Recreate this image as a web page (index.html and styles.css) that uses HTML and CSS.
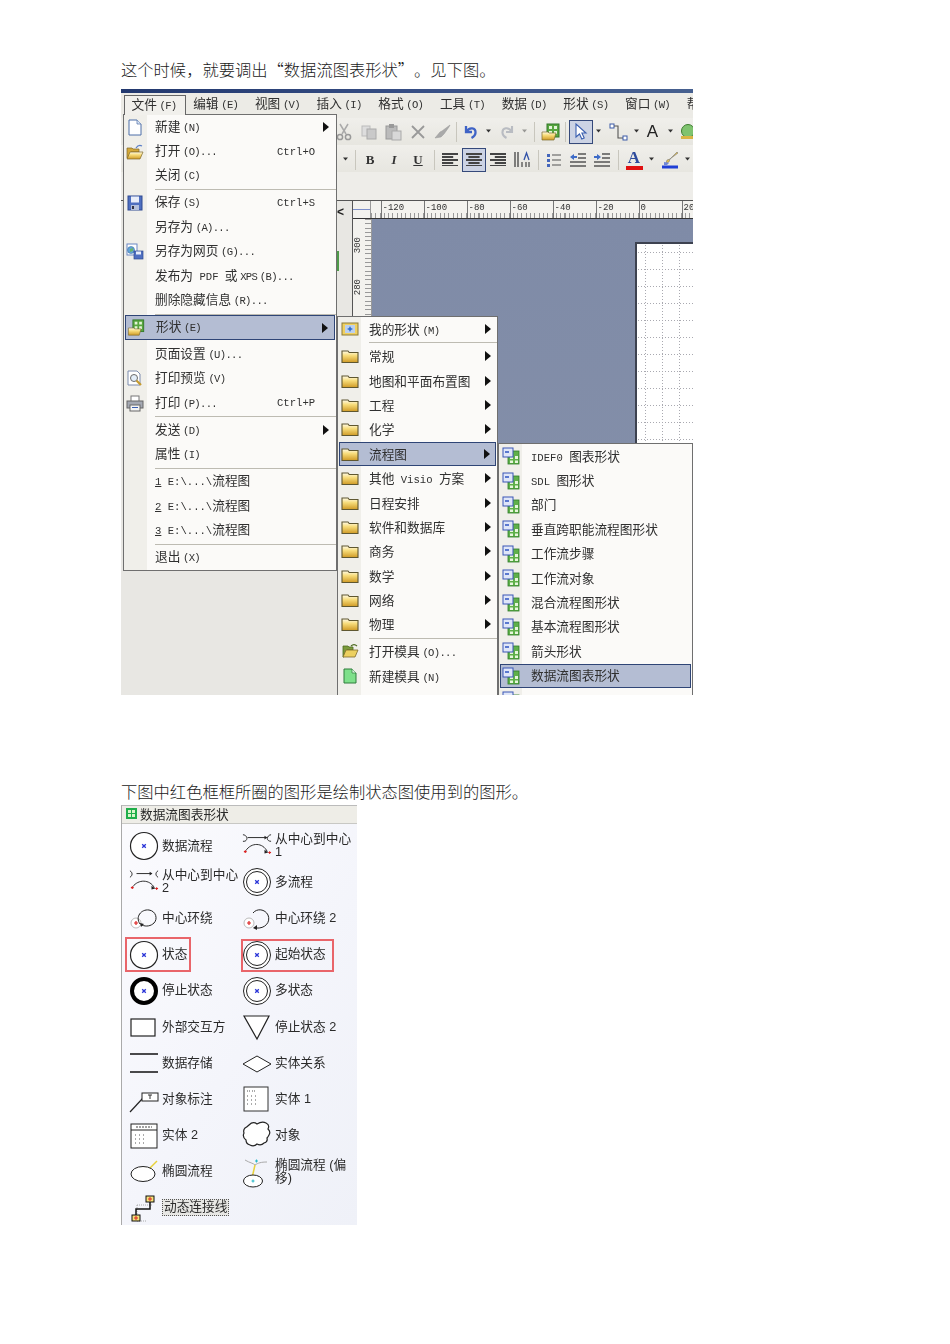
FILE: index.html
```html
<!DOCTYPE html>
<html lang="zh">
<head>
<meta charset="utf-8">
<title>数据流图表形状</title>
<link rel="stylesheet" href="styles.css">
</head>
<body>
<svg class="defs" aria-hidden="true">
  <defs>
    <linearGradient id="gf" x1="0" y1="0" x2="0" y2="1"><stop offset="0" stop-color="#fffbe8"/><stop offset=".4" stop-color="#f7dc7a"/><stop offset="1" stop-color="#cf9a26"/></linearGradient>
    <symbol id="folder" viewBox="0 0 18 16"><path d="M1 3h6l1.200 1.500H17v10H1z" fill="url(#gf)" stroke="#5f5730" stroke-width="1.100"/></symbol>
    <symbol id="stencil" viewBox="0 0 18 18"><rect x="6" y="4" width="11" height="13" fill="#5fb04a" stroke="#2e7d2a" stroke-width=".8"/><path d="M8 9h3v3H8zM13 9h3v3h-3zM8 13.500h3v2.500H8zM13 13.500h3v2.500h-3z" fill="#e6f6dc"/><rect x="1" y="1" width="10" height="9" fill="#dfe6f8" stroke="#3a57b5"/><path d="M3 4h4v2H3z" fill="#5a78cf"/></symbol>
    <symbol id="xcircle" viewBox="0 0 30 30"><path d="M13.200 13.200l3.600 3.600M16.800 13.200l-3.600 3.600" stroke="#2a35d8" stroke-width="1.300"/></symbol>
    <symbol id="arrowdown" viewBox="0 0 8 5"><path d="M1 .5h5L3.500 3.500z" fill="#333"/></symbol>
  </defs>
</svg>

<main class="page">
  <p class="para">这个时候，就要调出“数据流图表形状”。见下图。</p>

  <figure class="shot">
    <div class="titlebar"></div>
    <div class="menubar">
      <span class="mb-item mb-open">文件<span class="m"> (F)</span></span>
      <span class="mb-item">编辑<span class="m"> (E)</span></span>
      <span class="mb-item">视图<span class="m"> (V)</span></span>
      <span class="mb-item">插入<span class="m"> (I)</span></span>
      <span class="mb-item">格式<span class="m"> (O)</span></span>
      <span class="mb-item">工具<span class="m"> (T)</span></span>
      <span class="mb-item">数据<span class="m"> (D)</span></span>
      <span class="mb-item">形状<span class="m"> (S)</span></span>
      <span class="mb-item">窗口<span class="m"> (W)</span></span>
      <span class="mb-item">帮</span>
    </div>

    <div class="toolbar tb-one">
      <span class="slot w245"><svg width="16" height="18" viewBox="0 0 16 18"><path d="M4 1l6 10M12 1L6 11" stroke="#aaa" stroke-width="1.500" fill="none"/><circle cx="4" cy="14" r="2.600" fill="none" stroke="#999" stroke-width="1.500"/><circle cx="12" cy="14" r="2.600" fill="none" stroke="#999" stroke-width="1.500"/></svg></span>
      <span class="slot w245"><svg width="18" height="16" viewBox="0 0 18 16"><rect x="2" y="2" width="8" height="10" fill="#ddd" stroke="#bbb"/><rect x="7" y="5" width="9" height="10" fill="#c9c9c9" stroke="#aaa"/></svg></span>
      <span class="slot w245"><svg width="18" height="18" viewBox="0 0 18 18"><rect x="2" y="3" width="11" height="13" fill="#bbb" stroke="#999"/><rect x="5" y="1" width="5" height="4" fill="#999"/><rect x="8" y="8" width="9" height="9" fill="#d8d8d8" stroke="#aaa"/></svg></span>
      <span class="slot w245"><svg width="16" height="16" viewBox="0 0 16 16"><path d="M2 2l12 12M14 2L2 14" stroke="#999" stroke-width="1.800"/></svg></span>
      <span class="slot w245"><svg width="18" height="16" viewBox="0 0 18 16"><path d="M17 1L9 7l-2 1-5 6 6-1 3-3 5-7z" fill="#a9a9a9" stroke="#999" stroke-width=".5"/></svg></span>
      <span class="slot w4"><i class="sep"></i></span>
      <span class="slot w24"><svg width="16" height="16" viewBox="0 0 16 16"><path d="M3 2v6h6M3.500 7.500C6 3 13 3 12.500 9c-.2 2.500-2 4-4 5" fill="none" stroke="#3f63c6" stroke-width="2.300"/></svg></span>
      <span class="slot w12"><svg class="arr" width="8" height="5"><use href="#arrowdown"/></svg></span>
      <span class="slot w24"><svg width="16" height="16" viewBox="0 0 16 16"><path d="M13 2v6H7M12.500 7.500C10 3 3 3 3.500 9c.2 2.500 2 4 4 5" fill="none" stroke="#b9bcc2" stroke-width="2.100"/></svg></span>
      <span class="slot w12"><svg class="arr faint" width="8" height="5"><use href="#arrowdown"/></svg></span>
      <span class="slot w8"><i class="sep"></i></span>
      <span class="slot w24"><svg width="20" height="20" viewBox="0 0 20 20"><rect x="6" y="2" width="12" height="13" fill="#57a63f" stroke="#33782a"/><path d="M8 4h3v3H8zM13 4h3v3h-3zM8 9h3v3H8zM13 9h3v3h-3z" fill="#e3f4d8"/><path d="M1 10h6l1 1h7l-2 7H1z" fill="url(#gf)" stroke="#7d6a2c" stroke-width=".7"/></svg></span>
      <span class="slot w6"><i class="sep"></i></span>
      <span class="slot w24 active"><svg width="14" height="18" viewBox="0 0 14 18"><path d="M2 1v13l3.500-3 2.300 5 2.400-1-2.300-5H12z" fill="#fff" stroke="#3a5fb0" stroke-width="1.100"/></svg></span>
      <span class="slot w12"><svg class="arr" width="8" height="5"><use href="#arrowdown"/></svg></span>
      <span class="slot w28"><svg width="20" height="18" viewBox="0 0 20 18"><rect x="1" y="1" width="4" height="4" fill="#fff" stroke="#3b5aa8"/><path d="M5 3h4v12h5" fill="none" stroke="#555" stroke-width="1.100"/><rect x="14" y="13" width="4" height="4" fill="#fff" stroke="#3b5aa8"/></svg></span>
      <span class="slot w8"><svg class="arr" width="8" height="5"><use href="#arrowdown"/></svg></span>
      <span class="slot w24 big-a">A</span>
      <span class="slot w12"><svg class="arr" width="8" height="5"><use href="#arrowdown"/></svg></span>
      <span class="slot w22"><svg width="18" height="18" viewBox="0 0 18 18"><circle cx="9" cy="8" r="6.500" fill="#7fc36f" stroke="#3d7c30"/><rect x="2" y="13" width="12" height="3" fill="#d9b545"/></svg></span>
    </div>

    <div class="toolbar tb-two">
      <span class="slot w12"><svg class="arr" width="8" height="5"><use href="#arrowdown"/></svg></span>
      <span class="slot w6"><i class="sep"></i></span>
      <span class="slot w24 fmt fmt-b">B</span>
      <span class="slot w24 fmt fmt-i">I</span>
      <span class="slot w24 fmt fmt-u">U</span>
      <span class="slot w8"><i class="sep"></i></span>
      <span class="slot w24"><i class="lines lines-l"></i></span>
      <span class="slot w24 active"><i class="lines lines-c"></i></span>
      <span class="slot w24"><i class="lines lines-r"></i></span>
      <span class="slot w24"><svg width="18" height="18" viewBox="0 0 18 18"><path d="M2 1v15M5 1v15" stroke="#444" stroke-width="1.300"/><path d="M9 11v5M13 11v5M16 11v5" stroke="#444" stroke-width="1.200"/><path d="M11 9l2.500-7L16 9" fill="none" stroke="#3252a8" stroke-width="1.300"/></svg></span>
      <span class="slot w8"><i class="sep"></i></span>
      <span class="slot w24"><svg width="16" height="16" viewBox="0 0 16 16"><path d="M1 2h3v3H1zM1 7h3v3H1zM1 12h3v3H1z" fill="#4466bb"/><path d="M6 3h9M6 8h9M6 13h9" stroke="#555" stroke-width="1.200"/></svg></span>
      <span class="slot w24"><svg width="18" height="16" viewBox="0 0 18 16"><path d="M1 5l4-3v2h3v2H5v2z" fill="#3f6cc8"/><path d="M9 2h8M9 6h8M1 10h16M1 14h16" stroke="#555" stroke-width="1.300"/></svg></span>
      <span class="slot w24"><svg width="18" height="16" viewBox="0 0 18 16"><path d="M8 5L4 2v2H1v2h3v2z" fill="#3f6cc8"/><path d="M9 2h8M9 6h8M1 10h16M1 14h16" stroke="#555" stroke-width="1.300"/></svg></span>
      <span class="slot w8"><i class="sep"></i></span>
      <span class="slot w24 color-a"><span class="ca-letter">A</span><i class="ca-bar"></i></span>
      <span class="slot w12"><svg class="arr" width="8" height="5"><use href="#arrowdown"/></svg></span>
      <span class="slot w24"><svg width="18" height="18" viewBox="0 0 18 18"><path d="M16 1l-7 7-3 1-1 3 3-1 1-3 8-6z" fill="#e6c14b" stroke="#7a7a7a" stroke-width=".6"/><path d="M3 11l5 1-2 2H3z" fill="#6e86d8"/><rect x="1" y="14.500" width="16" height="3" fill="#1f3fd6"/></svg></span>
      <span class="slot w12"><svg class="arr" width="8" height="5"><use href="#arrowdown"/></svg></span>
    </div>

    <div class="blank"></div>

    <div class="work">
      <div class="sidepane"><span class="collapse">&lt;</span></div>
      <div class="docarea">
        <div class="ruler-row">
          <div class="ruler-corner"></div>
          <div class="hruler">
            <span>-120</span><span>-100</span><span>-80</span><span>-60</span><span>-40</span><span>-20</span><span>0</span><span>20</span>
          </div>
        </div>
        <div class="canvas-row">
          <div class="vruler"><span>300</span><span>280</span></div>
          <div class="canvas"><div class="sheet"></div></div>
        </div>
      </div>
    </div>

    <!-- File menu -->
    <div class="menu menu-file">
      <div class="mi"><span class="ic"><svg width="14" height="17" viewBox="0 0 14 17"><path d="M1 1h8l4 4v11H1z" fill="#fff" stroke="#4d6ea8"/><path d="M9 1v4h4" fill="#dce6f5" stroke="#4d6ea8" stroke-width=".7"/></svg></span><span class="lb">新建<span class="m"> (N)</span></span><span class="sub"></span></div>
      <div class="mi"><span class="ic"><svg width="18" height="16" viewBox="0 0 18 16"><path d="M1 4h5l1 1h6v3H5L2 14H1z" fill="#d4a838" stroke="#80692a" stroke-width=".7"/><path d="M4 8h13l-3 7H1z" fill="url(#gf)" stroke="#80692a" stroke-width=".7"/><path d="M10 4c2-3 4-3 6-2" fill="none" stroke="#5a7ec8" stroke-width="1.300"/></svg></span><span class="lb">打开<span class="m"> (O)...</span></span><span class="sc">Ctrl+O</span></div>
      <div class="mi"><span class="ic"></span><span class="lb">关闭<span class="m"> (C)</span></span></div>
      <div class="ms"></div>
      <div class="mi"><span class="ic"><svg width="16" height="16" viewBox="0 0 16 16"><rect x="1" y="1" width="14" height="14" fill="#4f6fc0" stroke="#2f4a92"/><rect x="4" y="1.500" width="8" height="6" fill="#e9eefa"/><rect x="4" y="10" width="8" height="5" fill="#b4c0dc"/><rect x="5" y="11" width="2" height="3" fill="#334"/></svg></span><span class="lb">保存<span class="m"> (S)</span></span><span class="sc">Ctrl+S</span></div>
      <div class="mi"><span class="ic"></span><span class="lb">另存为<span class="m"> (A)...</span></span></div>
      <div class="mi"><span class="ic"><svg width="18" height="17" viewBox="0 0 18 17"><rect x="1" y="1" width="10" height="11" fill="#fff" stroke="#6b87c4"/><circle cx="5" cy="7" r="3.500" fill="#63a4d8" stroke="#3a6ea5" stroke-width=".6"/><path d="M4 6l3-1 0 3-3 1z" fill="#6bb36a"/><rect x="8" y="8" width="9" height="8" fill="#4f6fc0" stroke="#2f4a92" stroke-width=".7"/><rect x="10" y="8.500" width="5" height="3" fill="#e9eefa"/></svg></span><span class="lb">另存为网页<span class="m"> (G)...</span></span></div>
      <div class="mi"><span class="ic"></span><span class="lb">发布为<span class="m p"> PDF </span>或<span class="m"> XPS (B)...</span></span></div>
      <div class="mi"><span class="ic"></span><span class="lb">删除隐藏信息<span class="m"> (R)...</span></span></div>
      <div class="ms"></div>
      <div class="mi hl"><span class="ic"><svg width="19" height="18" viewBox="0 0 20 20"><rect x="6" y="1" width="12" height="13" fill="#57a63f" stroke="#33782a"/><path d="M8 3h3v3H8zM13 3h3v3h-3zM8 8h3v3H8zM13 8h3v3h-3z" fill="#e3f4d8"/><path d="M1 10h6l1 1h7l-2 7H1z" fill="url(#gf)" stroke="#7d6a2c" stroke-width=".7"/></svg></span><span class="lb">形状<span class="m"> (E)</span></span><span class="sub"></span></div>
      <div class="ms ms-hidden"></div>
      <div class="mi"><span class="ic"></span><span class="lb">页面设置<span class="m"> (U)...</span></span></div>
      <div class="mi"><span class="ic"><svg width="16" height="17" viewBox="0 0 16 17"><path d="M1 1h9l3 3v11H1z" fill="#fff" stroke="#7c8cae"/><circle cx="7" cy="8" r="3.500" fill="#e3eefa" stroke="#6a6a6a"/><path d="M9.500 10.500L14 15" stroke="#c59a2f" stroke-width="2.200"/></svg></span><span class="lb">打印预览<span class="m"> (V)</span></span></div>
      <div class="mi"><span class="ic"><svg width="18" height="17" viewBox="0 0 18 17"><rect x="5" y="1" width="8" height="6" fill="#fff" stroke="#777"/><rect x="1" y="6" width="16" height="7" fill="#a4a8b2" stroke="#666"/><rect x="4" y="10" width="10" height="6" fill="#f4f4f4" stroke="#666"/><rect x="6" y="12" width="6" height="1" fill="#3a5fb0"/></svg></span><span class="lb">打印<span class="m"> (P)...</span></span><span class="sc">Ctrl+P</span></div>
      <div class="ms"></div>
      <div class="mi"><span class="ic"></span><span class="lb">发送<span class="m"> (D)</span></span><span class="sub"></span></div>
      <div class="mi"><span class="ic"></span><span class="lb">属性<span class="m"> (I)</span></span></div>
      <div class="ms"></div>
      <div class="mi"><span class="ic"></span><span class="lb"><span class="m p"><u>1</u> E:\...\</span>流程图</span></div>
      <div class="mi"><span class="ic"></span><span class="lb"><span class="m p"><u>2</u> E:\...\</span>流程图</span></div>
      <div class="mi"><span class="ic"></span><span class="lb"><span class="m p"><u>3</u> E:\...\</span>流程图</span></div>
      <div class="ms"></div>
      <div class="mi"><span class="ic"></span><span class="lb">退出<span class="m"> (X)</span></span></div>
    </div>

    <!-- Shapes submenu -->
    <div class="menu menu-shapes">
      <div class="mi"><span class="ic"><svg width="18" height="16" viewBox="0 0 18 16"><rect x="1" y="2" width="16" height="12" fill="#f0d060" stroke="#8a7a3a"/><rect x="4" y="4" width="10" height="8" fill="#bcd0ee"/><path d="M9 5l1 2 2 1-2 1-1 2-1-2-2-1 2-1z" fill="#2f6fd0"/></svg></span><span class="lb">我的形状<span class="m"> (M)</span></span><span class="sub"></span></div>
      <div class="ms"></div>
      <div class="mi"><span class="ic"><svg width="18" height="16"><use href="#folder"/></svg></span><span class="lb">常规</span><span class="sub"></span></div>
      <div class="mi"><span class="ic"><svg width="18" height="16"><use href="#folder"/></svg></span><span class="lb">地图和平面布置图</span><span class="sub"></span></div>
      <div class="mi"><span class="ic"><svg width="18" height="16"><use href="#folder"/></svg></span><span class="lb">工程</span><span class="sub"></span></div>
      <div class="mi"><span class="ic"><svg width="18" height="16"><use href="#folder"/></svg></span><span class="lb">化学</span><span class="sub"></span></div>
      <div class="mi hl"><span class="ic"><svg width="18" height="16"><use href="#folder"/></svg></span><span class="lb">流程图</span><span class="sub"></span></div>
      <div class="mi"><span class="ic"><svg width="18" height="16"><use href="#folder"/></svg></span><span class="lb">其他<span class="m p"> Visio </span>方案</span><span class="sub"></span></div>
      <div class="mi"><span class="ic"><svg width="18" height="16"><use href="#folder"/></svg></span><span class="lb">日程安排</span><span class="sub"></span></div>
      <div class="mi"><span class="ic"><svg width="18" height="16"><use href="#folder"/></svg></span><span class="lb">软件和数据库</span><span class="sub"></span></div>
      <div class="mi"><span class="ic"><svg width="18" height="16"><use href="#folder"/></svg></span><span class="lb">商务</span><span class="sub"></span></div>
      <div class="mi"><span class="ic"><svg width="18" height="16"><use href="#folder"/></svg></span><span class="lb">数学</span><span class="sub"></span></div>
      <div class="mi"><span class="ic"><svg width="18" height="16"><use href="#folder"/></svg></span><span class="lb">网络</span><span class="sub"></span></div>
      <div class="mi"><span class="ic"><svg width="18" height="16"><use href="#folder"/></svg></span><span class="lb">物理</span><span class="sub"></span></div>
      <div class="ms"></div>
      <div class="mi"><span class="ic"><svg width="18" height="16" viewBox="0 0 18 16"><path d="M2 14V3h5l1 1h4v3H6l-3 7z" fill="#7a9a3a" stroke="#4d6a20" stroke-width=".8"/><path d="M5 7h12l-3 7H2z" fill="#ecd060" stroke="#7d6a2c" stroke-width=".8"/><path d="M10 3c2-2 4-2 6 0" fill="none" stroke="#4d6a20" stroke-width="1.200"/></svg></span><span class="lb">打开模具<span class="m"> (O)...</span></span></div>
      <div class="mi"><span class="ic"><svg width="14" height="16" viewBox="0 0 14 16"><path d="M1 1h8l4 4v10H1z" fill="#7ee08a" stroke="#2f7d3c"/><path d="M9 1v4h4" fill="#d8f5dc" stroke="#2f7d3c" stroke-width=".7"/></svg></span><span class="lb">新建模具<span class="m"> (N)</span></span></div>
    </div>

    <!-- Stencils submenu -->
    <div class="menu menu-flow">
      <div class="mi"><span class="ic"><svg width="18" height="18"><use href="#stencil"/></svg></span><span class="lb"><span class="m p">IDEF0 </span>图表形状</span></div>
      <div class="mi"><span class="ic"><svg width="18" height="18"><use href="#stencil"/></svg></span><span class="lb"><span class="m p">SDL </span>图形状</span></div>
      <div class="mi"><span class="ic"><svg width="18" height="18"><use href="#stencil"/></svg></span><span class="lb">部门</span></div>
      <div class="mi"><span class="ic"><svg width="18" height="18"><use href="#stencil"/></svg></span><span class="lb">垂直跨职能流程图形状</span></div>
      <div class="mi"><span class="ic"><svg width="18" height="18"><use href="#stencil"/></svg></span><span class="lb">工作流步骤</span></div>
      <div class="mi"><span class="ic"><svg width="18" height="18"><use href="#stencil"/></svg></span><span class="lb">工作流对象</span></div>
      <div class="mi"><span class="ic"><svg width="18" height="18"><use href="#stencil"/></svg></span><span class="lb">混合流程图形状</span></div>
      <div class="mi"><span class="ic"><svg width="18" height="18"><use href="#stencil"/></svg></span><span class="lb">基本流程图形状</span></div>
      <div class="mi"><span class="ic"><svg width="18" height="18"><use href="#stencil"/></svg></span><span class="lb">箭头形状</span></div>
      <div class="mi hl"><span class="ic"><svg width="18" height="18"><use href="#stencil"/></svg></span><span class="lb">数据流图表形状</span></div>
      <div class="mi"><span class="ic"><svg width="18" height="18"><use href="#stencil"/></svg></span></div>
    </div>
  </figure>

  <p class="para para-two">下图中红色框框所圈的图形是绘制状态图使用到的图形。</p>

  <figure class="panel">
    <header class="panel-head">
      <svg width="11" height="11" viewBox="0 0 11 11"><rect width="11" height="11" fill="#1fae4a"/><path d="M2 2h3v3H2zM6 2h3v3H6zM2 6h3v3H2zM6 6h3v3H6z" fill="#d8f5c8"/></svg>
      <span>数据流图表形状</span>
    </header>
    <div class="shapes">
      <div class="shape"><svg width="30" height="30" viewBox="0 0 30 30"><circle cx="15" cy="15" r="13.500" fill="#fff" stroke="#222" stroke-width="1.200"/><use href="#xcircle"/></svg><span>数据流程</span></div>
      <div class="shape"><svg width="32" height="30" viewBox="0 0 32 30"><path d="M1 3c3 0 5 3 4 5s-2 2-4 2M6 6h20" fill="none" stroke="#222"/><path d="M31 3c-2 0-4 2-4 4s2 3 4 3" fill="none" stroke="#222"/><path d="M24 4l3 2-3 2z" fill="#222"/><path d="M4 20c6-9 18-9 23 1" fill="none" stroke="#222"/><path d="M24 19l4 3-4 1z" fill="#222"/><path d="M2 21h3M3.500 19.500v3M28 22h3M29.500 20.500v3" stroke="#d22" stroke-width="1.100"/></svg><span>从中心到中心<br>1</span></div>
      <div class="shape"><svg width="30" height="30" viewBox="0 0 32 30"><path d="M1 3c3 2 3 5 0 7M8 6h16M31 3c-3 2-3 5 0 7" fill="none" stroke="#222"/><path d="M22 4l3 2-3 2z" fill="#222"/><path d="M4 20c6-8 18-8 23 1" fill="none" stroke="#222"/><path d="M24 19l4 3-4 1z" fill="#222"/><path d="M2 21h3M3.500 19.500v3M28 22h3M29.500 20.500v3" stroke="#d22" stroke-width="1.100"/></svg><span>从中心到中心<br>2</span></div>
      <div class="shape"><svg width="30" height="30" viewBox="0 0 30 30"><circle cx="15" cy="15" r="13.500" fill="#fff" stroke="#222"/><circle cx="15" cy="15" r="10.500" fill="#fff" stroke="#222"/><use href="#xcircle"/></svg><span>多流程</span></div>
      <div class="shape"><svg width="30" height="30" viewBox="0 0 30 30"><circle cx="7" cy="20" r="5" fill="#fff" stroke="#bbb"/><path d="M5 20h4M7 18v4" stroke="#d22" stroke-width="1.200"/><path d="M11 21C6 14 12 6 20 7c7 1 9 9 5 13-3 3-8 4-12 2" fill="none" stroke="#222"/><path d="M11 20l4 1-3 3z" fill="#222"/></svg><span>中心环绕</span></div>
      <div class="shape"><svg width="30" height="30" viewBox="0 0 30 30"><circle cx="7" cy="20" r="5" fill="#fff" stroke="#bbb"/><path d="M5 20h4M7 18v4" stroke="#d22" stroke-width="1.200"/><path d="M11 10C15 5 23 6 26 12c3 7-3 14-12 13" fill="none" stroke="#222"/><path d="M15 22l-4 3 4 2z" fill="#222"/></svg><span>中心环绕 2</span></div>
      <div class="shape boxed box-a"><svg width="30" height="30" viewBox="0 0 30 30"><circle cx="15" cy="15" r="13.500" fill="#fff" stroke="#222" stroke-width="1.200"/><use href="#xcircle"/></svg><span>状态</span></div>
      <div class="shape boxed box-b"><svg width="30" height="30" viewBox="0 0 30 30"><circle cx="15" cy="15" r="13.500" fill="#fff" stroke="#222"/><circle cx="15" cy="15" r="10.500" fill="#fff" stroke="#222"/><use href="#xcircle"/></svg><span>起始状态</span></div>
      <div class="shape"><svg width="30" height="30" viewBox="0 0 30 30"><circle cx="15" cy="15" r="12" fill="#fff" stroke="#000" stroke-width="4"/><use href="#xcircle"/></svg><span>停止状态</span></div>
      <div class="shape"><svg width="30" height="30" viewBox="0 0 30 30"><circle cx="15" cy="15" r="13.500" fill="#fff" stroke="#222"/><circle cx="15" cy="15" r="10.500" fill="#fff" stroke="#222"/><use href="#xcircle"/></svg><span>多状态</span></div>
      <div class="shape"><svg width="30" height="30" viewBox="0 0 30 30"><rect x="2" y="7" width="24" height="17" fill="#fff" stroke="#222" stroke-width="1.200"/></svg><span>外部交互方</span></div>
      <div class="shape"><svg width="30" height="30" viewBox="0 0 30 30"><path d="M2 4h25L15 27z" fill="#fff" stroke="#222" stroke-width="1.200"/></svg><span>停止状态 2</span></div>
      <div class="shape"><svg width="30" height="30" viewBox="0 0 30 30"><path d="M1 6h28M1 24h28" stroke="#111" stroke-width="1.400"/></svg><span>数据存储</span></div>
      <div class="shape"><svg width="30" height="30" viewBox="0 0 30 30"><path d="M1 16L15 8l14 8-14 8z" fill="#fff" stroke="#222"/></svg><span>实体关系</span></div>
      <div class="shape"><svg width="30" height="30" viewBox="0 0 30 30"><path d="M1 28L14 14" stroke="#222" stroke-width="1.200"/><rect x="13" y="9" width="16" height="8" fill="#fff" stroke="#222"/><path d="M19 11h4M21 11v4" stroke="#333"/></svg><span>对象标注</span></div>
      <div class="shape"><svg width="30" height="30" viewBox="0 0 30 30"><rect x="2" y="3" width="24" height="24" fill="#fff" stroke="#333"/><path d="M5 7h3M10 7h4M5 12h2M9 12h2M13 12h2M5 16h2M9 16h2M13 16h2M5 20h2M9 20h2M13 20h2" stroke="#555" stroke-dasharray="1 1"/></svg><span>实体 1</span></div>
      <div class="shape"><svg width="30" height="30" viewBox="0 0 30 30"><rect x="2" y="3" width="26" height="24" fill="#fff" stroke="#222"/><path d="M2 9h26" stroke="#222"/><path d="M7 6h16" stroke="#444" stroke-dasharray="2 1"/><path d="M6 14h2M10 14h2M14 14h2M6 18h2M10 18h2M14 18h2M6 22h2M10 22h2M14 22h2" stroke="#555" stroke-dasharray="1 1"/></svg><span>实体 2</span></div>
      <div class="shape"><svg width="30" height="30" viewBox="0 0 30 30"><path d="M7 4q4-4 8-1q5-3 9-1q4 2 2 6q3 3 1 6q-1 2-2 3q1 4-3 5q-3 3-7 1q-3 3-7 1q-4-1-4-5q-4-3-2-7q-1-3 1-5q2-1 4-3z" fill="#fff" stroke="#222" stroke-width="1.200"/></svg><span>对象</span></div>
      <div class="shape"><svg width="30" height="30" viewBox="0 0 30 30"><path d="M20 12l8-8" stroke="#e8d23a" stroke-width="1.500"/><ellipse cx="14" cy="17" rx="12" ry="7.500" fill="#fff" stroke="#222"/></svg><span>椭圆流程</span></div>
      <div class="shape"><svg width="30" height="32" viewBox="0 0 30 32"><path d="M3 4c5 3 8 3 10 5 3-2 6-3 12-3" fill="none" stroke="#aaa"/><path d="M13 9l-3 13" stroke="#e8d23a" stroke-width="1.500"/><path d="M13 5h3M14.500 3.500v3" stroke="#29b8c8" stroke-width="1.100"/><ellipse cx="11" cy="25" rx="9.500" ry="6" fill="#fff" stroke="#222"/><path d="M9.500 25h3M11 23.500v3" stroke="#29b8c8" stroke-width="1.100"/></svg><span>椭圆流程 (偏<br>移)</span></div>
      <div class="shape shape-connector"><svg width="30" height="30" viewBox="0 0 30 30"><path d="M8 12v16M8 12h16M8 28h10" fill="none" stroke="#aaa" stroke-dasharray="1 1"/><path d="M7 22v-6h14V8" fill="none" stroke="#111" stroke-width="1.500"/><rect x="17" y="3" width="8" height="6" fill="#f6e27a" stroke="#111"/><rect x="3" y="22" width="8" height="6" fill="#f6e27a" stroke="#111"/><path d="M19 6h4M21 4v4M5 25h4M7 23v4" stroke="#d22"/></svg><span class="dashed">动态连接线</span></div>
    </div>
  </figure>
</main>
</body>
</html>
```

FILE: styles.css
```css
* { box-sizing: border-box; }

html, body { margin: 0; padding: 0; background: #fff; }

body {
  font-family: "Noto Sans CJK SC", "Liberation Sans", sans-serif;
  color: #222;
}

.defs { position: absolute; width: 0; height: 0; }

.page {
  width: 950px;
  height: 1344px;
  overflow: hidden;
  padding: 59px 0 0 121px;
}

.para {
  margin: 0;
  height: 20px;
  line-height: 20px;
  font-size: 16.300px;
  font-weight: 300;
  white-space: nowrap;
  color: #1a1a1a;
  text-spacing-trim: space-all;
}

.para-two { margin-top: 86px; }

/* ---------- screenshot 1 ---------- */
.shot {
  position: relative;
  margin: 10px 0 0;
  width: 572px;
  height: 606px;
  overflow: hidden;
  background: #e8e7e3;
  font-size: 12.700px;
  color: #303030;
  filter: blur(.35px);
}

.m {
  font-family: "Liberation Mono", monospace;
  font-size: 10.600px;
  white-space: pre;
  letter-spacing: -.7px;
  word-spacing: -3px;
}

.m.p {
  letter-spacing: 0;
  word-spacing: 0;
}

.titlebar {
  height: 4px;
  background: linear-gradient(90deg, #22386e, #3a5288 60%, #46608f);
}

.menubar {
  display: flex;
  height: 25px;
  padding: 2px 0 0 3px;
  background: #ecebe6;
  white-space: nowrap;
}

.mb-item {
  flex: 0 0 61.700px;
  height: 20px;
  padding-left: 7.500px;
  line-height: 16px;
}

.mb-open {
  position: relative;
  z-index: 3;
  background: #f1f0ec;
  border: 1px solid #666;
  border-bottom: 0;
  padding-left: 6.500px;
}

.toolbar {
  display: flex;
  align-items: center;
  height: 27px;
  background: linear-gradient(#f0efeb, #e7e6e0);
}

.tb-one { padding-left: 211px; }
.tb-two { padding: 2px 0 0 219px; }

.slot {
  display: flex;
  flex: none;
  align-items: center;
  justify-content: center;
  height: 24px;
}

.w245 { width: 24.500px; }
.w24 { width: 24px; }
.w28 { width: 28px; }
.w22 { width: 22px; }
.w12 { width: 12px; }
.w8 { width: 8px; }
.w6 { width: 6px; }
.w4 { width: 4px; }

.active {
  background: #ccd3e4;
  border: 1px solid #35497a;
}

.sep {
  display: block;
  width: 1px;
  height: 20px;
  background: #c8c6bd;
}

.faint { opacity: .45; }

.big-a {
  font-family: "Liberation Sans", sans-serif;
  font-size: 17px;
  color: #222;
}

.fmt {
  font-family: "Liberation Serif", serif;
  font-size: 13px;
  font-weight: 700;
  color: #333;
}

.fmt-i { font-style: italic; }
.fmt-u { text-decoration: underline; }

.lines {
  display: block;
  width: 16px;
  height: 13px;
  background: repeating-linear-gradient(#444 0 1.500px, transparent 1.500px 3px);
}

.lines-l { clip-path: polygon(0 0, 100% 0, 100% 23%, 70% 23%, 70% 46%, 100% 46%, 100% 69%, 70% 69%, 70% 92%, 100% 92%, 100% 100%, 0 100%); }
.lines-c { clip-path: polygon(0 0, 100% 0, 100% 23%, 85% 23%, 85% 46%, 100% 46%, 100% 69%, 85% 69%, 85% 92%, 100% 92%, 100% 100%, 0 100%, 0 92%, 15% 92%, 15% 69%, 0 69%, 0 46%, 15% 46%, 15% 23%, 0 23%); }
.lines-r { clip-path: polygon(0 0, 100% 0, 100% 100%, 0 100%, 0 92%, 30% 92%, 30% 69%, 0 69%, 0 46%, 30% 46%, 30% 23%, 0 23%); }

.color-a { flex-direction: column; justify-content: flex-end; padding-bottom: 2px; }

.ca-letter {
  font-family: "Liberation Serif", serif;
  font-size: 17px;
  font-weight: 700;
  line-height: 16px;
  color: #2c4a9c;
}

.ca-bar {
  display: block;
  width: 17px;
  height: 4px;
  background: #e01010;
}

.blank {
  height: 29px;
  background: #eeede9;
  border-bottom: 1px solid #555;
}

.work {
  display: flex;
  height: 494px;
}

.sidepane {
  position: relative;
  flex: 0 0 231px;
  background: #e8e7e3;
  text-align: right;
}

.sidepane::after {
  content: "";
  position: absolute;
  left: 216px;
  top: 50px;
  width: 2px;
  height: 20px;
  background: #4f9a4a;
}

.collapse {
  position: absolute;
  left: 216px;
  top: 4px;
  font: 700 12px/14px "Liberation Sans", sans-serif;
  color: #222;
}

.docarea {
  display: flex;
  flex: 1;
  flex-direction: column;
  border-left: 1px solid #555;
}

.ruler-row {
  display: flex;
  flex: 0 0 18px;
  border-bottom: 1px solid #333;
  background: #f3f2ee;
}

.ruler-corner {
  flex: 0 0 18px;
  background: linear-gradient(#7d8fc9, #7d8fc9) 0 8px / 100% 1px no-repeat, #f3f2ee;
  border-right: 1px solid #999;
}

.hruler {
  display: flex;
  flex: 1;
  padding-left: 9.500px;
  background: repeating-linear-gradient(90deg, #999 0 1px, transparent 1px 4.300px) 0 100% / 100% 5px no-repeat;
  overflow: hidden;
}

.hruler span {
  flex: 0 0 43px;
  padding: 2px 0 0 1px;
  border-left: 1px solid #777;
  font: 9px/10px "Liberation Mono", monospace;
  color: #333;
}

.canvas-row {
  display: flex;
  flex: 1;
}

.vruler {
  display: flex;
  flex: 0 0 19px;
  flex-direction: column;
  align-items: flex-start;
  padding-top: 18px;
  gap: 26px;
  background:
    repeating-linear-gradient(#999 0 1px, transparent 1px 4.300px) 100% 0 / 6px 100% no-repeat,
    #f3f2ee;
  border-right: 1px solid #999;
}

.vruler span {
  writing-mode: vertical-rl;
  transform: rotate(180deg);
  font: 9px/10px "Liberation Mono", monospace;
  color: #333;
}

.canvas {
  flex: 1;
  padding: 23px 0 0 263px;
  background: linear-gradient(#7f8ba7, #8691aa);
}

.sheet {
  height: 100%;
  border-top: 2px solid #3d4250;
  border-left: 2px solid #3d4250;
  background-color: #fff;
  background-image:
    radial-gradient(circle, #a9a9b0 .7px, transparent .9px),
    radial-gradient(circle, #a9a9b0 .7px, transparent .9px);
  background-size: 3px 17px, 17px 3px;
}

/* ---------- menus ---------- */
.menu {
  position: absolute;
  border: 1px solid #6f6f6f;
  background: linear-gradient(90deg, #f0efea 0 23px, #fbfaf8 23px);
  white-space: nowrap;
}

.menu-file {
  left: 2px;
  top: 25px;
  width: 214px;
  z-index: 1;
}

.menu-shapes {
  left: 216px;
  top: 227px;
  width: 161px;
  height: 400px;
  z-index: 1;
}

.menu-flow {
  left: 377px;
  top: 354px;
  width: 195px;
  height: 270px;
  z-index: 2;
}

.mi {
  display: flex;
  align-items: center;
  height: 24.400px;
  padding-right: 8px;
}

.menu-shapes .mi { padding-right: 6px; }
.menu-file .mi { padding-right: 7px; }

.ic {
  display: flex;
  flex: 0 0 24px;
  align-items: center;
  justify-content: center;
}

.lb { margin: 0 0 1px 7px; }

.menu-file .lb { margin: 0 0 4px 8px; }
.menu-flow .lb { margin: 0 0 2px 8px; }

.menu-file .ic { margin-left: -1px; }

.sc {
  flex: 0 0 auto;
  margin-left: auto;
  margin-right: 12px;
  font-family: "Liberation Mono", monospace;
  font-size: 10.600px;
}

.menu-file .sc { position: absolute; left: 153px; }

.sub {
  flex: 0 0 auto;
  margin-left: auto;
  width: 0;
  height: 0;
  border-left: 6px solid #111;
  border-top: 5px solid transparent;
  border-bottom: 5px solid transparent;
}

.ms {
  height: 2.600px;
  margin-left: 31px;
  background: linear-gradient(#bdbbb2, #bdbbb2) 0 1px / 100% 1px no-repeat;
}

.ms-hidden { background: none; }

.hl {
  margin: 0 1px;
  background: #b4bdd3;
  outline: 1px solid #2f4576;
  outline-offset: -1px;
}

.hl .ic { margin-left: -1px; }

/* ---------- screenshot 2 ---------- */
.panel {
  margin: 4px 0 0;
  width: 236px;
  height: 420px;
  overflow: hidden;
  background: linear-gradient(125deg, #fbfbfe 0%, #f4f5fb 55%, #eff1f8 100%);
  border-left: 1px solid #aaa;
  border-top: 1px solid #bbb;
  font-family: "Liberation Sans", "Noto Sans CJK SC", sans-serif;
  font-size: 12.700px;
  line-height: 13px;
  color: #2a2a2a;
  filter: blur(.3px);
}

.panel-head {
  display: flex;
  align-items: center;
  gap: 3px;
  height: 18px;
  padding: 0 0 2px 4px;
  background: #eeede7;
  border-bottom: 1px solid #c8c8c4;
  font-family: "Noto Sans CJK SC", sans-serif;
}

.panel-head span { margin-bottom: 1px; }

.shapes {
  display: grid;
  grid-template-columns: 113px 119px;
  grid-auto-rows: 36.200px;
  padding: 4px 0 0 3px;
}

.shape {
  position: relative;
  display: flex;
  align-items: center;
  gap: 3px;
  padding-left: 4px;
  white-space: nowrap;
}

.shape svg { flex: none; width: 30px; }

.boxed::after {
  content: "";
  position: absolute;
  box-sizing: border-box;
  border: 2px solid #e9656a;
}

.box-a::after { left: 0; top: 0; width: 66px; height: 35px; }
.box-b::after { left: 3px; top: 2px; width: 93px; height: 33px; }

.shape-connector { grid-column: 1 / span 2; }

.dashed {
  padding: 1px;
  border: 1px dotted #555;
  background: #e7e7e4;
}
```
